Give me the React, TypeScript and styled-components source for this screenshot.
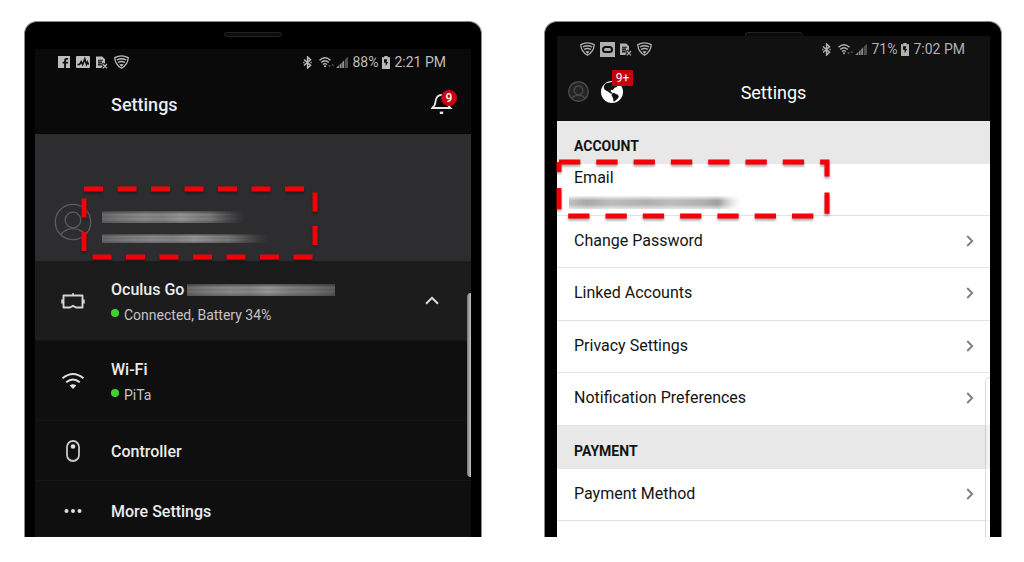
import React from "react";
import styled, { createGlobalStyle } from "styled-components";

const GlobalStyle = createGlobalStyle`
  *, *::before, *::after { box-sizing: border-box; }
  body { margin: 0; background: #fff; font-family: Roboto, "Liberation Sans", sans-serif; }
  button { font: inherit; color: inherit; border: 0; background: none; padding: 0; }
  a { color: inherit; text-decoration: none; }
  h1, h2, p, ul { margin: 0; padding: 0; font-weight: inherit; font-size: inherit; }
  ul { list-style: none; }
  svg { display: block; flex: none; }
`;

const Page = styled.main`
  display: grid;
  grid-template-columns: 1fr 1fr;
  gap: 62px;
  padding: 21px 22px 25px 24px;
`;

const PhoneFrame = styled.section<{ $sides: string }>`
  display: flex;
  flex-direction: column;
  min-width: 0;
  padding: ${(p) => p.$sides};
  background: #000;
  border: 1px solid #8c8c8c;
  border-bottom: 0;
  border-radius: 13px 13px 0 0;
`;

const Bezel = styled.div<{ $height: number }>`
  display: flex;
  justify-content: center;
  align-items: flex-start;
  height: ${(p) => p.$height}px;
  padding-top: 10px;
  overflow: hidden;
`;

const Speaker = styled.div`
  flex: none;
  width: 58px;
  height: 5px;
  background: #0c0c0c;
  border: 1px solid #222;
  border-radius: 3px;
`;

const Screen = styled.div<{ $light?: boolean }>`
  position: relative;
  flex: 1;
  background: ${(p) => (p.$light ? "#fff" : "#0f0f0f")};
  color: ${(p) => (p.$light ? "#141414" : "#ececec")};
`;

const StatusBar = styled.div<{ $dim?: boolean }>`
  display: flex;
  justify-content: space-between;
  align-items: center;
  height: 26px;
  padding: 0 25px 0 23px;
  color: ${(p) => (p.$dim ? "#b0b0b0" : "#bdbdbd")};
  font-size: 14px;
  line-height: 16px;
`;

const StatusGroup = styled.div<{ $gap: number }>`
  display: flex;
  align-items: center;
  gap: ${(p) => p.$gap}px;
`;

const DarkHeader = styled.header`
  background: #0a0a0a;
  border-bottom: 1px solid #060606;
`;

const DarkTitleBar = styled.div`
  display: flex;
  align-items: center;
  justify-content: space-between;
  height: 58px;
  padding: 2px 12px 0 76px;
`;

const DarkTitle = styled.h1`
  font-size: 18px;
  line-height: 24px;
  font-weight: 500;
`;

const BellButton = styled.button`
  position: relative;
  width: 28px;
  height: 28px;
`;

const BellBadge = styled.span`
  position: absolute;
  top: -1px;
  right: 2px;
  width: 16px;
  height: 16px;
  border-radius: 50%;
  background: #c8000f;
  color: #fff;
  font-size: 12px;
  line-height: 16px;
  font-weight: 500;
  text-align: center;
`;

const Banner = styled.section`
  position: relative;
  display: flex;
  align-items: flex-start;
  height: 127px;
  padding: 69px 0 0 19px;
  gap: 10px;
  background: #2d2d2f;
`;

const HiddenLines = styled.div`
  display: flex;
  flex-direction: column;
  gap: 11px;
  padding-top: 8px;
`;

const DarkSmudge = styled.div<{ $width: number; $height: number; $fade?: boolean }>`
  width: ${(p) => p.$width}px;
  height: ${(p) => p.$height}px;
  background:
    linear-gradient(180deg, rgba(35, 35, 35, 0.6), transparent 30%, rgba(30, 30, 30, 0.15) 50%, transparent 65%, rgba(30, 30, 30, 0.35)),
    linear-gradient(90deg, #6a6a6a, #7c7c7c 12%, #8c8c8c 30%, #868686 42%, #989898 55%, #808080 70%, #747474 85%, #5c5c5c);
  ${(p) => p.$fade && "mask-image: linear-gradient(90deg, #000 75%, transparent);"}
`;

const LightSmudge = styled.div`
  width: 172px;
  height: 13px;
  margin-left: -5px;
  background:
    linear-gradient(180deg, rgba(255, 255, 255, 0.85), transparent 35%, transparent 65%, rgba(255, 255, 255, 0.65)),
    linear-gradient(90deg, #c2c2c2, #a8a8a8 10%, #bcbcbc 25%, #b0b0b0 45%, #bcbcbc 60%, #b0b0b0 78%, #9c9c9c 88%, #ccc);
  mask-image: linear-gradient(90deg, #000 86%, transparent);
`;

const CalloutSvg = styled.svg<{ $left: number; $top: number }>`
  position: absolute;
  z-index: 2;
  left: ${(p) => p.$left}px;
  top: ${(p) => p.$top}px;
  overflow: visible;
  pointer-events: none;
  filter: drop-shadow(0 2px 1px rgba(0, 0, 0, 0.35));
`;

const DarkRow = styled.button<{ $height: number; $inset?: number; $raised?: boolean }>`
  display: flex;
  align-items: center;
  width: 100%;
  height: ${(p) => p.$height}px;
  padding-top: ${(p) => p.$inset ?? 0}px;
  padding-right: 32px;
  text-align: left;
  background: ${(p) => (p.$raised ? "#1c1c1c" : "transparent")};
  border-bottom: 1px solid #171717;
`;

const RowIcon = styled.span`
  display: flex;
  flex: none;
  justify-content: center;
  width: 76px;
`;

const RowText = styled.span`
  display: flex;
  flex: 1;
  flex-direction: column;
  gap: 4px;
  padding-top: 3px;
`;

const RowTitle = styled.span`
  display: flex;
  align-items: center;
  gap: 3px;
  font-size: 16px;
  line-height: 22px;
  font-weight: 500;
`;

const RowStatus = styled.span`
  display: flex;
  align-items: center;
  gap: 5px;
  font-size: 14px;
  line-height: 20px;
  color: #c4c4c4;
`;

const OnlineDot = styled.i`
  width: 8px;
  height: 8px;
  margin-bottom: 4px;
  border-radius: 50%;
  background: #3fd12f;
`;

const DarkScrollbar = styled.div`
  position: absolute;
  right: 0;
  top: 244px;
  width: 4px;
  height: 184px;
  border-radius: 4px 0 0 4px;
  background: linear-gradient(90deg, #777, #c6c6c6);
`;

const LightScrollbar = styled.div`
  position: absolute;
  right: 0;
  top: 341px;
  bottom: 0;
  width: 5px;
  border: 1px solid rgba(0, 0, 0, 0.14);
  border-width: 1px 0 0 1px;
  border-radius: 5px 0 0 0;
  background: rgba(255, 255, 255, 0.4);
`;

const LightHeader = styled.header`
  background: #111;
  color: #fff;
`;

const LightTitleBar = styled.div`
  display: grid;
  grid-template-columns: 1fr auto 1fr;
  align-items: center;
  height: 59px;
  padding: 0 11px;
`;

const LightTitle = styled.h1`
  padding-top: 2px;
  font-size: 18px;
  line-height: 24px;
`;

const HeaderActions = styled.div`
  display: flex;
  align-items: center;
  gap: 12px;
`;

const GlobeButton = styled.button`
  position: relative;
`;

const CountBadge = styled.span`
  position: absolute;
  left: 11px;
  top: -11px;
  width: 21px;
  height: 16px;
  border-radius: 1px;
  background: #c4000f;
  color: #fff;
  font-size: 12px;
  line-height: 16px;
  text-align: center;
`;

const SectionHeading = styled.h2`
  height: 43px;
  padding: 15px 17px 0;
  background: #e8e8e8;
  font-size: 14px;
  line-height: 20px;
  font-weight: 700;
`;

const LightItem = styled.li`
  position: relative;
  height: 52px;
  border-bottom: 1px solid #e3e3e3;
  font-size: 16px;
  line-height: 20px;

  &:nth-child(2n + 3) {
    height: 53px;
  }
`;

const EmailField = styled.div`
  display: flex;
  flex-direction: column;
  gap: 8px;
  padding: 4px 17px;
`;

const LightLink = styled.a`
  display: flex;
  align-items: center;
  justify-content: space-between;
  height: 100%;
  padding: 0 16px 2px 17px;
`;

const BadgeShield = () => (
  <svg width="15" height="14" viewBox="0 0 15 14" fill="none" stroke="currentColor">
    <path d="M.8 2.6Q7.5-.9 14.2 2.6C14.1 7.4 11.6 11 7.5 13.3 3.4 11 .9 7.4.8 2.6z" strokeWidth="1.3" />
    <path d="M2.8 5Q7.5 2.4 12.2 5M4 7.5Q7.5 5.4 11 7.5" strokeWidth="1.4" />
    <path d="M5.3 9.6Q7.5 8.2 9.7 9.6L7.5 11.8z" fill="currentColor" stroke="none" />
  </svg>
);

const FacebookMark = () => (
  <svg width="12" height="12" viewBox="0 0 12 12">
    <rect width="12" height="12" fill="currentColor" />
    <path d="M8 12V7.500h2V5.700H8v-.8c0-.8.3-1.100 1.100-1.100h1V2.100H8.600C6.900 2.100 6.100 3 6.100 4.600v1.100H4.600v1.800h1.500V12z" fill="#101010" />
  </svg>
);

const ActivityMark = () => (
  <svg width="14" height="12" viewBox="0 0 14 12">
    <rect width="14" height="12" rx="1" fill="currentColor" />
    <path d="M1.500 8.500h2L5.200 5.600l1.500 3L8.800 3l1.700 5.400L11.400 6l1.200 2.500" fill="none" stroke="#111" strokeWidth="1.600" />
  </svg>
);

const SimMark = () => (
  <svg width="12" height="13" viewBox="0 0 12 13">
    <path d="M0 .5h6.200L9 3.200V7L7 12H0z" fill="currentColor" />
    <path d="M2 4.200h5M2 6.300h4M2 8.400h3M3 4v6M5 4v6" stroke="#111" strokeWidth=".9" />
    <path d="M6.400 7.500l4.800 5M11.200 7.500l-4.800 5" stroke="#111" strokeWidth="3" />
    <path d="M6.800 8l4.200 4.400M11 8l-4.200 4.400" stroke="currentColor" strokeWidth="1.100" />
  </svg>
);

const OculusMark = () => (
  <svg width="15" height="15" viewBox="0 0 15 15">
    <rect width="15" height="15" fill="currentColor" />
    <rect x="3" y="5" width="9" height="5" rx="2.500" fill="none" stroke="#111" strokeWidth="2" />
  </svg>
);

const BluetoothMark = () => (
  <svg width="9" height="13" viewBox="0 0 9 13" fill="none" stroke="currentColor" strokeWidth="1.500">
    <path d="M1 3.500l6.500 5.800L4.600 12V1l2.900 2.700L1 9.500" />
    <path d="M.3 6.500h1.200M7.500 6.500h1.200" />
  </svg>
);

const NetworkMarks = () => (
  <svg width="29" height="13" viewBox="0 0 29 13">
    <g fill="none" stroke="currentColor" strokeWidth="1.300">
      <path d="M.5 4.300Q6-.8 11.500 4.300M2.200 6.400Q6 3 9.800 6.400M4 8.500q2-1.600 4 0" />
    </g>
    <circle cx="6" cy="10.200" r="1" fill="currentColor" />
    <path d="M9.200 9.300h2.600L10.500 11.500zM12.500 9.800h2.600l-1.300-2.200z" fill="currentColor" opacity=".4" />
    <path d="M17 12l3-2.800V12zM20.600 8.700l2-1.900V12h-2zM23.200 6.200l2-1.900V12h-2z" fill="currentColor" opacity=".75" />
    <path d="M26 3.600L29 .8V12h-3z" fill="currentColor" opacity=".4" />
  </svg>
);

const BatteryMark = () => (
  <svg width="8" height="13" viewBox="0 0 8 13">
    <path d="M2.300 0h3.400v1.300H8V13H0V1.300h2.300z" fill="currentColor" />
    <path d="M5.300 3.200H2v3.600h1.600v3.400L6.200 6H4.500z" fill="#111" />
  </svg>
);

const Bell = () => (
  <svg width="28" height="28" viewBox="0 0 28 28" fill="none" stroke="#e8e8e8" strokeWidth="1.800">
    <path d="M1.300 17h18c-2-1.600-2.400-3.200-2.500-6.200-.2-4.600-2-7-5.800-7-4.200 0-6.200 2.600-6.500 7-.2 3.200-1.200 4.600-3.200 6.200z" />
    <path d="M8.800 21.800h3.400" strokeWidth="2.400" />
  </svg>
);

const Globe = () => (
  <svg width="22" height="22" viewBox="0 0 22 22">
    <circle cx="11" cy="11" r="11" fill="#fff" />
    <path d="M5 2.200C2.600 4.200 2.200 6.500 3.600 8.500c1 1.500 2.600 1.200 3.700 2.300.9 1 2.200 1.800 3.500 2l.5-1.100-1.700-1.300.4-1.600 2 .3 1.500-2.300L16 6V3L11 1z" fill="#111" />
    <path d="M11 12.600c1.400-1.100 2.700-.7 3.800.4 1.400.4 2.700 1 3 2.200-.3 1.800-1.500 2.700-2.700 3.900-.7.9-1.700 1.500-2.500 1.500-.5-1.800 0-3-.9-4.200-1-1.200-1.400-2.600-.7-3.800z" fill="#111" />
  </svg>
);

const Avatar = ({ size, color, fill = "none" }: { size: number; color: string; fill?: string }) => (
  <svg width={size} height={size} viewBox="0 0 38 38" fill="none" stroke={color} strokeWidth={size > 30 ? 1.3 : 2.6}>
    <circle cx="19" cy="19" r="17.700" fill={fill} />
    <circle cx="19" cy="17" r="7.800" />
    <path d="M6.800 31.500C10 27.500 14 25.600 19 25.600s9 1.900 12.200 5.900" />
  </svg>
);

const Headset = () => (
  <svg width="24" height="18" viewBox="0 0 24 18" fill="none" stroke="#d4d4d4" strokeWidth="1.900" strokeLinejoin="round">
    <path d="M2.500 3.500h19v12H15L12 13.800l-3 1.700H2.500zM12 1.200v2.300M1.200 7.500v4M22.800 7.500v4" />
  </svg>
);

const WifiIcon = () => (
  <svg width="24" height="18" viewBox="0 0 24 18" fill="none" stroke="#dedede" strokeWidth="2">
    <path d="M1.500 6.300Q12-2.300 22.500 6.300M5.200 10.300q6.800-5.600 13.600 0" />
    <path d="M8.700 13.500q3.300-2.700 6.600 0L12 17z" fill="#dedede" stroke="none" />
  </svg>
);

const ControllerIcon = () => (
  <svg width="14" height="22" viewBox="0 0 14 22">
    <rect x="1" y="1" width="12" height="20" rx="6" fill="none" stroke="#c8c8c8" strokeWidth="1.800" />
    <circle cx="7" cy="6.500" r="2.300" fill="#dedede" />
  </svg>
);

const DotsIcon = () => (
  <svg width="18" height="6" viewBox="0 0 18 6" fill="#dedede">
    <circle cx="2.500" cy="3" r="2" />
    <circle cx="9" cy="3" r="2" />
    <circle cx="15.500" cy="3" r="2" />
  </svg>
);

const ChevronUp = () => (
  <svg width="14" height="9" viewBox="0 0 14 9" fill="none" stroke="#dcdcdc" strokeWidth="2">
    <path d="M1 7.800l6-6 6 6" />
  </svg>
);

const ChevronRight = () => (
  <svg width="8" height="12" viewBox="0 0 8 12" fill="none" stroke="#808080" strokeWidth="1.900">
    <path d="M1.200 1l5 5-5 5" />
  </svg>
);

type CalloutProps = { left: number; top: number; width: number; height: number; dash: string };

const Callout = ({ left, top, width, height, dash }: CalloutProps) => (
  <CalloutSvg $left={left} $top={top} width={width} height={height} aria-hidden="true">
    <path
      d={`M0 0H${width}V${height}H0V0`}
      fill="none"
      stroke="#f50008"
      strokeWidth="5"
      strokeDasharray={dash}
    />
  </CalloutSvg>
);

const StatusInfo = ({ level, time }: { level: string; time: string }) => (
  <StatusGroup $gap={4}>
    <StatusGroup $gap={7}>
      <BluetoothMark />
      <NetworkMarks />
    </StatusGroup>
    <span>{level}</span>
    <BatteryMark />
    <span>{time}</span>
  </StatusGroup>
);

const links = ["Change Password", "Linked Accounts", "Privacy Settings", "Notification Preferences"];

const LinkRow = ({ label }: { label: string }) => (
  <LightItem>
    <LightLink href="#">
      {label}
      <ChevronRight />
    </LightLink>
  </LightItem>
);

export default function App() {
  return (
    <>
      <GlobalStyle />
      <Page>
        <PhoneFrame $sides="0 10px">
          <Bezel $height={27}>
            <Speaker />
          </Bezel>
          <Screen>
            <DarkHeader>
              <StatusBar>
                <StatusGroup $gap={6}>
                  <FacebookMark />
                  <ActivityMark />
                  <SimMark />
                  <BadgeShield />
                </StatusGroup>
                <StatusInfo level="88%" time="2:21 PM" />
              </StatusBar>
              <DarkTitleBar>
                <DarkTitle>Settings</DarkTitle>
                <BellButton aria-label="Notifications">
                  <Bell />
                  <BellBadge>9</BellBadge>
                </BellButton>
              </DarkTitleBar>
            </DarkHeader>
            <Banner>
              <Avatar size={38} color="#5c5c5e" />
              <HiddenLines>
                <DarkSmudge $width={144} $height={12} $fade />
                <DarkSmudge $width={168} $height={9} $fade />
              </HiddenLines>
              <Callout left={49} top={55} width={231} height={68} dash="19 14.5" />
            </Banner>
            <DarkRow $height={80} $raised>
              <RowIcon><Headset /></RowIcon>
              <RowText>
                <RowTitle>
                  Oculus Go
                  <DarkSmudge as="span" $width={148} $height={12} />
                </RowTitle>
                <RowStatus><OnlineDot />Connected, Battery 34%</RowStatus>
              </RowText>
              <ChevronUp />
            </DarkRow>
            <DarkRow $height={80}>
              <RowIcon><WifiIcon /></RowIcon>
              <RowText>
                <RowTitle>Wi-Fi</RowTitle>
                <RowStatus><OnlineDot />PiTa</RowStatus>
              </RowText>
            </DarkRow>
            <DarkRow $height={60}>
              <RowIcon><ControllerIcon /></RowIcon>
              <RowText><RowTitle>Controller</RowTitle></RowText>
            </DarkRow>
            <DarkRow $height={56} $inset={4}>
              <RowIcon><DotsIcon /></RowIcon>
              <RowText><RowTitle>More Settings</RowTitle></RowText>
            </DarkRow>
            <DarkScrollbar />
          </Screen>
        </PhoneFrame>

        <PhoneFrame $sides="0 11px 0 12px">
          <Bezel $height={14}>
            <Speaker />
          </Bezel>
          <Screen $light>
            <LightHeader>
              <StatusBar $dim>
                <StatusGroup $gap={5}>
                  <BadgeShield />
                  <OculusMark />
                  <SimMark />
                  <BadgeShield />
                </StatusGroup>
                <StatusInfo level="71%" time="7:02 PM" />
              </StatusBar>
              <LightTitleBar>
                <HeaderActions>
                  <Avatar size={21} color="#4a4a4a" fill="#242424" />
                  <GlobeButton aria-label="Activity">
                    <Globe />
                    <CountBadge>9+</CountBadge>
                  </GlobeButton>
                </HeaderActions>
                <LightTitle>Settings</LightTitle>
              </LightTitleBar>
            </LightHeader>
            <SectionHeading>ACCOUNT</SectionHeading>
            <ul>
              <LightItem>
                <EmailField>
                  Email
                  <LightSmudge />
                </EmailField>
                <Callout left={2} top={-2} width={268} height={54} dash="21.3 16" />
              </LightItem>
              {links.map((label) => (
                <LinkRow key={label} label={label} />
              ))}
            </ul>
            <SectionHeading>PAYMENT</SectionHeading>
            <ul>
              <LinkRow label="Payment Method" />
            </ul>
            <LightScrollbar />
          </Screen>
        </PhoneFrame>
      </Page>
    </>
  );
}
